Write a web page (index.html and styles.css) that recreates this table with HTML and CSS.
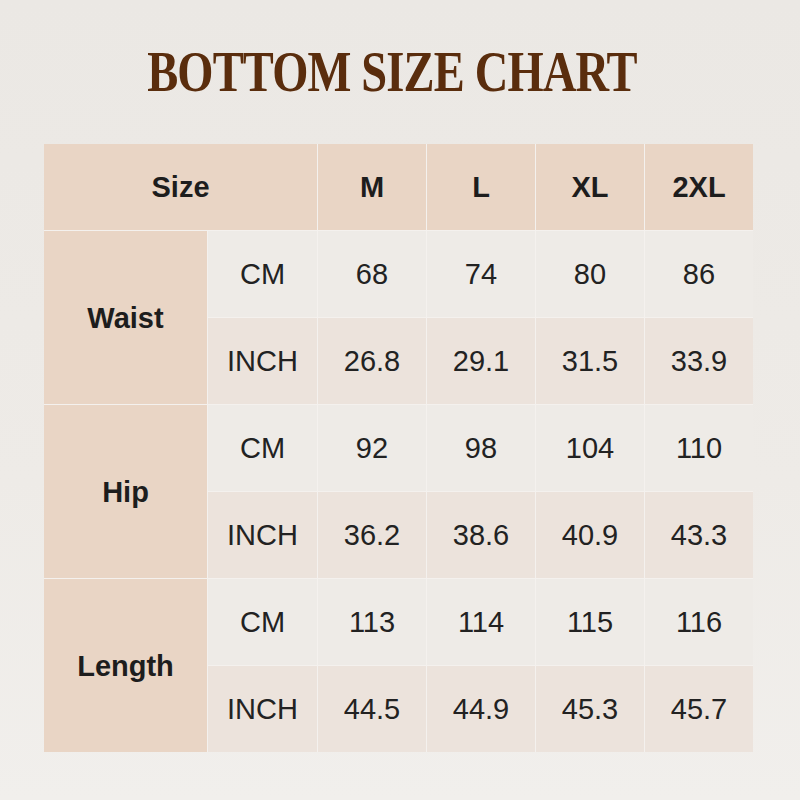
FILE: index.html
```html
<!DOCTYPE html>
<html>
<head>
<meta charset="utf-8">
<link rel="stylesheet" href="styles.css">
</head>
<body>
<div class="page">
  <h1 class="title"><span class="title-text">BOTTOM SIZE CHART</span></h1>
  <div class="chart">
    <div class="cell head span2">Size</div>
    <div class="cell head">M</div>
    <div class="cell head">L</div>
    <div class="cell head">XL</div>
    <div class="cell head">2XL</div>

    <div class="cell label">Waist</div>
    <div class="cell cm">CM</div>
    <div class="cell cm">68</div>
    <div class="cell cm">74</div>
    <div class="cell cm">80</div>
    <div class="cell cm">86</div>
    <div class="cell inch">INCH</div>
    <div class="cell inch">26.8</div>
    <div class="cell inch">29.1</div>
    <div class="cell inch">31.5</div>
    <div class="cell inch">33.9</div>

    <div class="cell label">Hip</div>
    <div class="cell cm">CM</div>
    <div class="cell cm">92</div>
    <div class="cell cm">98</div>
    <div class="cell cm">104</div>
    <div class="cell cm">110</div>
    <div class="cell inch">INCH</div>
    <div class="cell inch">36.2</div>
    <div class="cell inch">38.6</div>
    <div class="cell inch">40.9</div>
    <div class="cell inch">43.3</div>

    <div class="cell label">Length</div>
    <div class="cell cm">CM</div>
    <div class="cell cm">113</div>
    <div class="cell cm">114</div>
    <div class="cell cm">115</div>
    <div class="cell cm">116</div>
    <div class="cell inch">INCH</div>
    <div class="cell inch">44.5</div>
    <div class="cell inch">44.9</div>
    <div class="cell inch">45.3</div>
    <div class="cell inch">45.7</div>
  </div>
</div>
</body>
</html>
```

FILE: styles.css
```css
html, body {
  margin: 0;
  padding: 0;
}
body {
  width: 800px;
  height: 800px;
  background: linear-gradient(180deg, #ebe8e4 0%, #eeebe7 60%, #f1efec 100%);
  font-family: "Liberation Sans", Arial, sans-serif;
  overflow: hidden;
}
.page {
  padding-top: 42px;
  display: flex;
  flex-direction: column;
  align-items: center;
}
.title {
  margin: 0 16px 42px 0;
  height: 60px;
  line-height: 60px;
  font-family: "Liberation Serif", "Times New Roman", serif;
  font-weight: bold;
  font-size: 56px;
  letter-spacing: -1px;
  color: #5a2d0d;
  text-align: center;
  white-space: nowrap;
}
.title-text {
  display: inline-block;
  transform: scaleX(0.83);
}
.chart {
  display: grid;
  grid-template-columns: 163px 109px repeat(4, 108px);
  grid-template-rows: 86px repeat(6, 86px);
  gap: 1px;
  background: #f4f1ee;
  margin-left: -3px;
}
.cell {
  display: flex;
  align-items: center;
  justify-content: center;
  font-size: 29px;
  color: #222;
}
.head {
  background: #e9d5c5;
  font-weight: bold;
  color: #1d1d1d;
}
.span2 {
  grid-column: span 2;
}
.label {
  grid-row: span 2;
  background: #e9d5c5;
  font-weight: bold;
  color: #1d1d1d;
  padding-top: 2px;
}
.cm {
  background: #eeebe7;
}
.inch {
  background: #ece3dc;
}
```
